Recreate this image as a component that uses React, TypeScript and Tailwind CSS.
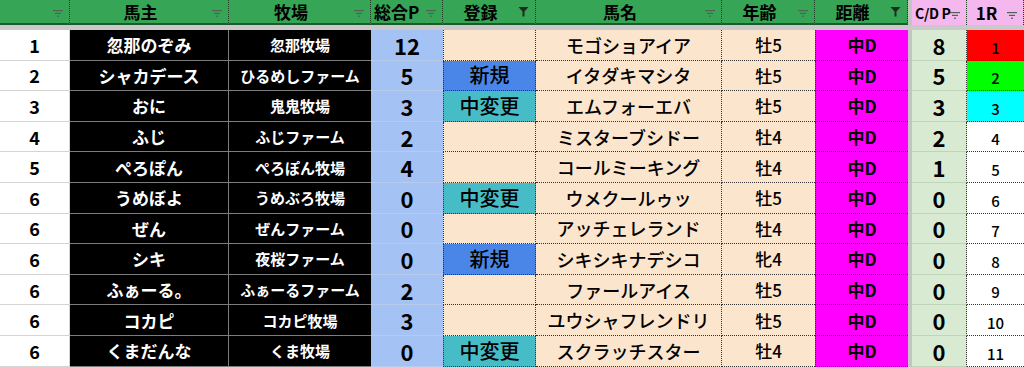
import React from "react";

type Row = {
  rank: number;
  owner: string;
  farm: string;
  total: number;
  reg: "" | "新規" | "中変更";
  horse: string;
  age: string;
  dist: string;
  cdp: number;
  r1: number;
};

const rows: Row[] = [
  { rank: 1, owner: "忽那のぞみ", farm: "忽那牧場", total: 12, reg: "", horse: "モゴショアイア", age: "牡5", dist: "中D", cdp: 8, r1: 1 },
  { rank: 2, owner: "シャカデース", farm: "ひるめしファーム", total: 5, reg: "新規", horse: "イタダキマシタ", age: "牡5", dist: "中D", cdp: 5, r1: 2 },
  { rank: 3, owner: "おに", farm: "鬼鬼牧場", total: 3, reg: "中変更", horse: "エムフォーエバ", age: "牡5", dist: "中D", cdp: 3, r1: 3 },
  { rank: 4, owner: "ふじ", farm: "ふじファーム", total: 2, reg: "", horse: "ミスターブシドー", age: "牡4", dist: "中D", cdp: 2, r1: 4 },
  { rank: 5, owner: "ぺろぽん", farm: "ぺろぽん牧場", total: 4, reg: "", horse: "コールミーキング", age: "牡4", dist: "中D", cdp: 1, r1: 5 },
  { rank: 6, owner: "うめぼよ", farm: "うめぶろ牧場", total: 0, reg: "中変更", horse: "ウメクールゥッ", age: "牡5", dist: "中D", cdp: 0, r1: 6 },
  { rank: 6, owner: "ぜん", farm: "ぜんファーム", total: 0, reg: "", horse: "アッチェレランド", age: "牡4", dist: "中D", cdp: 0, r1: 7 },
  { rank: 6, owner: "シキ", farm: "夜桜ファーム", total: 0, reg: "新規", horse: "シキシキナデシコ", age: "牝4", dist: "中D", cdp: 0, r1: 8 },
  { rank: 6, owner: "ふぁーる。", farm: "ふぁーるファーム", total: 2, reg: "", horse: "ファールアイス", age: "牡5", dist: "中D", cdp: 0, r1: 9 },
  { rank: 6, owner: "コカピ", farm: "コカピ牧場", total: 3, reg: "", horse: "ユウシャフレンドリ", age: "牡5", dist: "中D", cdp: 0, r1: 10 },
  { rank: 6, owner: "くまだんな", farm: "くま牧場", total: 0, reg: "中変更", horse: "スクラッチスター", age: "牡4", dist: "中D", cdp: 0, r1: 11 },
];

const GRID =
  "grid grid-cols-[70px_159px_142px_72px_93px_186px_93px_93px_4px_55px_57px]";

// sheet grid lines; marked important so the reset never eats them
const DOT_B = "[border-bottom:1px_dotted_#333]!";
const DOT_R = "[border-right:1px_dotted_#333]!";
const DOT_L = "[border-left:1px_dotted_#333]!";

function FilterIcon({ active }: { active?: boolean }) {
  if (active) {
    return (
      <svg width="11" height="11" viewBox="0 0 11 11" className="shrink-0">
        <path d="M0.5 1 H10.5 L6.5 5.5 V10.5 H4.5 V5.5 Z" fill="#1c2e1f" />
      </svg>
    );
  }
  return (
    <svg width="10" height="7" viewBox="0 0 10 7" className="shrink-0">
      <rect x="0" y="0" width="10" height="1.2" fill="#4f6355" />
      <rect x="2" y="2.8" width="6" height="1.2" fill="#4f6355" />
      <rect x="4" y="5.6" width="2" height="1.2" fill="#4f6355" />
    </svg>
  );
}

function Head({
  label,
  active,
  pink,
  small,
  left,
}: {
  label?: string;
  active?: boolean;
  pink?: boolean;
  small?: boolean;
  left?: boolean;
}) {
  return (
    <div
      className={`relative flex items-center h-full [border-right:1px_dotted_#1a3d22]! ${
        pink ? "bg-[#f4b8ef]" : "bg-[#36a656] [border-bottom:2px_solid_#1d5a2e]!"
      } ${left ? "justify-start pl-[3px]!" : "justify-center pr-[17px]!"}`}
    >
      <span
        className={`font-bold text-black leading-none ${
          small ? "text-[14px] tracking-[-0.3px]" : "text-[17px]"
        }`}
      >
        {label}
      </span>
      <div className="absolute right-[6px] bottom-[6px] flex">
        <FilterIcon active={active} />
      </div>
    </div>
  );
}

function regBg(reg: Row["reg"]) {
  if (reg === "新規") return "bg-[#4a86e8]";
  if (reg === "中変更") return "bg-[#46bdc6]";
  return "bg-[#fce5cd]";
}

function r1Bg(n: number) {
  if (n === 1) return "bg-[#ff0000]";
  if (n === 2) return "bg-[#00ff00]";
  if (n === 3) return "bg-[#00ffff]";
  return "bg-white";
}

export default function App() {
  return (
    <div
      className="w-[1024px] h-[367px] overflow-hidden bg-white"
      style={{ fontFamily: '"Noto Sans CJK JP", "Noto Sans", sans-serif' }}
    >
      <div className={`${GRID} h-[25px]`}>
        <Head />
        <Head label="馬主" />
        <Head label="牧場" />
        <Head label="総合P" left />
        <Head label="登録" active />
        <Head label="馬名" />
        <Head label="年齢" />
        <Head label="距離" active />
        <div className="bg-[#c4c4c4]" />
        <Head label="C/D P" pink small left />
        <Head label="1R" pink />
      </div>
      <div className="h-[5px] bg-[#c9c9c9]" />
      {rows.map((r, i) => (
        <div key={i} className={`${GRID} h-[30.6px] leading-none`}>
          <div className="flex items-center justify-center bg-white [border-bottom:1px_solid_#d4d4d4]! [border-right:1px_solid_#d4d4d4]! text-[18px] font-bold text-black">
            {r.rank}
          </div>
          <div className="flex items-center justify-center bg-black [border-bottom:1px_solid_#7c7c7c]! [border-right:1px_solid_#7c7c7c]! text-[17px] font-bold text-white">
            {r.owner}
          </div>
          <div className="flex items-center justify-center bg-black [border-bottom:1px_solid_#7c7c7c]! text-[15px] font-bold text-white">
            {r.farm}
          </div>
          <div className="flex items-center justify-center bg-[#a4c2f4] [border-bottom:1px_solid_#b9cbea]! text-[22px] font-bold text-black">
            {r.total}
          </div>
          <div
            className={`flex items-center justify-center ${regBg(r.reg)} ${DOT_B} ${DOT_R} ${DOT_L} text-[20px] font-medium text-black`}
          >
            {r.reg}
          </div>
          <div className={`flex items-center justify-center bg-[#fce5cd] ${DOT_B} ${DOT_R} text-[18px] font-medium text-black`}>
            {r.horse}
          </div>
          <div className={`flex items-center justify-center bg-[#fce5cd] ${DOT_B} text-[17px] font-medium text-black`}>
            {r.age}
          </div>
          <div className={`flex items-center justify-center bg-[#ff00ff] ${DOT_B} ${DOT_L} text-[17px] font-bold text-black`}>
            {r.dist}
          </div>
          <div className="bg-[#c4c4c4]" />
          <div className={`flex items-center justify-center bg-[#d9ead3] [border-bottom:1px_solid_#c0d4ba]! ${DOT_R} text-[22px] font-bold text-black`}>
            {r.cdp}
          </div>
          <div
            className={`flex items-end justify-center pb-[5px]! ${r1Bg(r.r1)} ${DOT_B} text-[15px] font-medium text-black`}
          >
            {r.r1}
          </div>
        </div>
      ))}
    </div>
  );
}
